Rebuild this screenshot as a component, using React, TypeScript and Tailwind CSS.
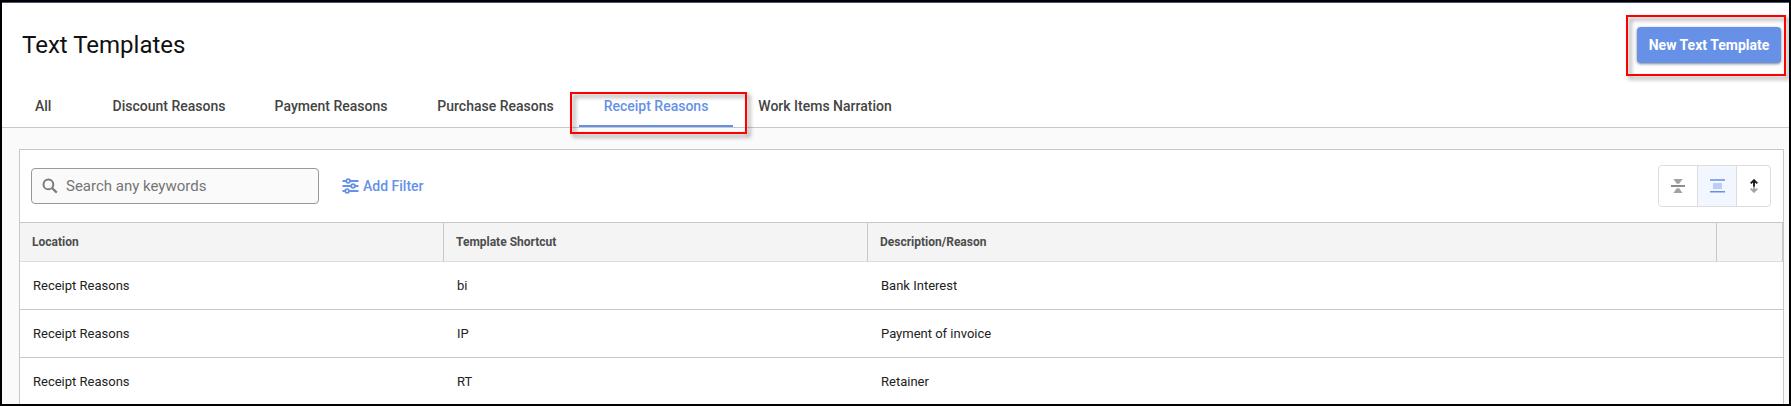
const tabs = [
  { label: "Discount Reasons", width: "w-[162px]" },
  { label: "Payment Reasons", width: "w-[162px]" },
  { label: "Purchase Reasons", width: "w-[167px]" },
  { label: "Receipt Reasons", width: "w-[154px]", active: true },
  { label: "Work Items Narration", width: "w-[184px]" },
];

const rows = [
  { location: "Receipt Reasons", shortcut: "bi", description: "Bank Interest" },
  { location: "Receipt Reasons", shortcut: "IP", description: "Payment of invoice" },
  { location: "Receipt Reasons", shortcut: "RT", description: "Retainer" },
];

function Highlight({ className }: { className: string }) {
  return (
    <span
      aria-hidden="true"
      className={`pointer-events-none absolute z-10 border-2 border-[#ff0000] drop-shadow-[3px_3px_2px_rgba(0,0,0,0.45)] ${className}`}
    />
  );
}

function SearchIcon() {
  return (
    <svg width="16" height="16" viewBox="0 0 16 16" fill="none" stroke="#7a7a7a" strokeWidth="2" aria-hidden="true">
      <circle cx="6.4" cy="6.4" r="4.9" />
      <path d="M10 10l4.8 4.6" strokeWidth="2.2" />
    </svg>
  );
}

function FilterIcon() {
  return (
    <svg width="17" height="16" viewBox="0 0 17 16" fill="none" stroke="#6691e7" strokeWidth="1.8" aria-hidden="true">
      <path d="M.5 3H4M8.2 3H16.5M.5 8H9M13.2 8H16.5M.5 13H3M7.2 13H16.5" />
      <circle cx="6.1" cy="3" r="1.9" />
      <circle cx="11.1" cy="8" r="1.9" />
      <circle cx="5.1" cy="13" r="1.9" />
    </svg>
  );
}

function CompactIcon() {
  return (
    <svg width="14" height="14" viewBox="0 0 14 14" aria-hidden="true">
      <path d="M2.4 0H11.6L8.2 4.8H5.8ZM2.4 14H11.6L8.2 9.2H5.8Z" fill="#a3a3a3" />
      <path d="M0 6.4H14V7.6H0Z" fill="#1b1b1f" />
    </svg>
  );
}

function ComfortableIcon() {
  return (
    <svg width="15" height="14" viewBox="0 0 15 14" aria-hidden="true">
      <path d="M0 1H15M0 12.7H15" stroke="#6691e7" strokeWidth="1.4" />
      <rect x="3" y="4" width="9" height="6" rx=".6" fill="#b9cdf5" />
    </svg>
  );
}

function SortIcon() {
  return (
    <svg width="8" height="14" viewBox="0 0 8 14" fill="none" strokeWidth="1.9" aria-hidden="true">
      <path d="M4 7V12.8M.7 9.6L4 12.8L7.3 9.6" stroke="#a3a3a3" />
      <path d="M4 7.5V1.4M.7 4.4L4 1.2L7.3 4.4" stroke="#1b1b1f" />
    </svg>
  );
}

export default function App() {
  return (
    <div className="flex h-screen flex-col overflow-hidden border-2 border-black bg-[#fafafa] font-['Roboto',sans-serif]">
      <header className="border-t border-b border-t-[#46507a] border-b-[#c8c8c8] bg-white">
        <div className="flex items-center justify-between pt-6 pr-2 pl-5">
          <h1 className="text-2xl leading-9 text-[#111111]">Text Templates</h1>
          <div className="relative">
            <button
              type="button"
              className="h-9 w-36 rounded bg-[#6691e7] text-sm font-bold text-white shadow-[0_1px_3px_rgba(0,0,0,0.5)]"
            >
              New Text Template
            </button>
            <Highlight className="-top-3 -right-[5px] -bottom-[13px] -left-[11px]" />
          </div>
        </div>
        <nav className="mt-[22px] flex text-sm leading-5 font-medium text-[#444444]" aria-label="Template types">
          <a href="#all" className="h-[42px] w-[86px] pt-[11px] pl-[33px]">
            All
          </a>
          {tabs.map((tab) => (
            <a
              key={tab.label}
              href="#templates"
              aria-current={tab.active ? "page" : undefined}
              className={`relative h-[42px] pt-[11px] text-center whitespace-nowrap ${tab.width} ${
                tab.active ? "border-b-2 border-[#6691e7] text-[#6691e7]" : ""
              }`}
            >
              {tab.label}
              {tab.active && <Highlight className="-right-[14px] -bottom-[9px] -left-[9px] top-[7px]" />}
            </a>
          ))}
        </nav>
      </header>

      <main className="mt-[21px] mr-[5px] ml-[17px] grow border border-b-0 border-[#c8c8c8] bg-white">
        <div className="flex h-[72px] items-center pr-3 pl-[11px]">
          <label className="flex h-9 w-72 items-center gap-2 rounded border border-[#999999] bg-[#fafafa] pl-2.5">
            <SearchIcon />
            <input
              type="text"
              aria-label="Search any keywords"
              placeholder="Search any keywords"
              className="min-w-0 flex-1 bg-transparent text-[15px] leading-5 text-[#444444] outline-none placeholder:text-[#757575]"
            />
          </label>
          <button type="button" className="ml-[23px] flex items-center gap-1 text-sm leading-5 font-medium text-[#6691e7]">
            <FilterIcon />
            Add Filter
          </button>
          <div className="ml-auto flex h-[42px] divide-x divide-[#dddddd] overflow-hidden rounded border border-[#dddddd]">
            <button type="button" aria-label="Compact rows" className="flex w-[39px] items-center justify-center">
              <CompactIcon />
            </button>
            <button
              type="button"
              aria-label="Comfortable rows"
              aria-pressed="true"
              className="flex w-[39px] items-center justify-center bg-[#f2f6fe]"
            >
              <ComfortableIcon />
            </button>
            <button type="button" aria-label="Sort order" className="flex w-[33px] items-center justify-center">
              <SortIcon />
            </button>
          </div>
        </div>

        <table className="w-full table-fixed border-separate border-spacing-0 text-left">
          <thead>
            <tr className="h-10 bg-[#f4f4f4] text-xs font-bold text-[#4d4d4d] *:border-t *:border-r *:border-b *:border-t-[#c8c8c8] *:border-r-[#c8c8c8] *:border-b-[#dddddd] *:px-3">
              <th scope="col" className="w-[424px]">Location</th>
              <th scope="col" className="w-[424px]">Template Shortcut</th>
              <th scope="col">Description/Reason</th>
              <th scope="col" className="w-[66px]" aria-label="Actions" />
            </tr>
          </thead>
          <tbody className="text-[13px] text-[#222222]">
            {rows.map((row) => (
              <tr key={row.shortcut} className="h-12 *:border-b *:border-[#c8c8c8] *:px-[13px]">
                <td>{row.location}</td>
                <td>{row.shortcut}</td>
                <td>{row.description}</td>
                <td />
              </tr>
            ))}
          </tbody>
        </table>
      </main>
    </div>
  );
}
